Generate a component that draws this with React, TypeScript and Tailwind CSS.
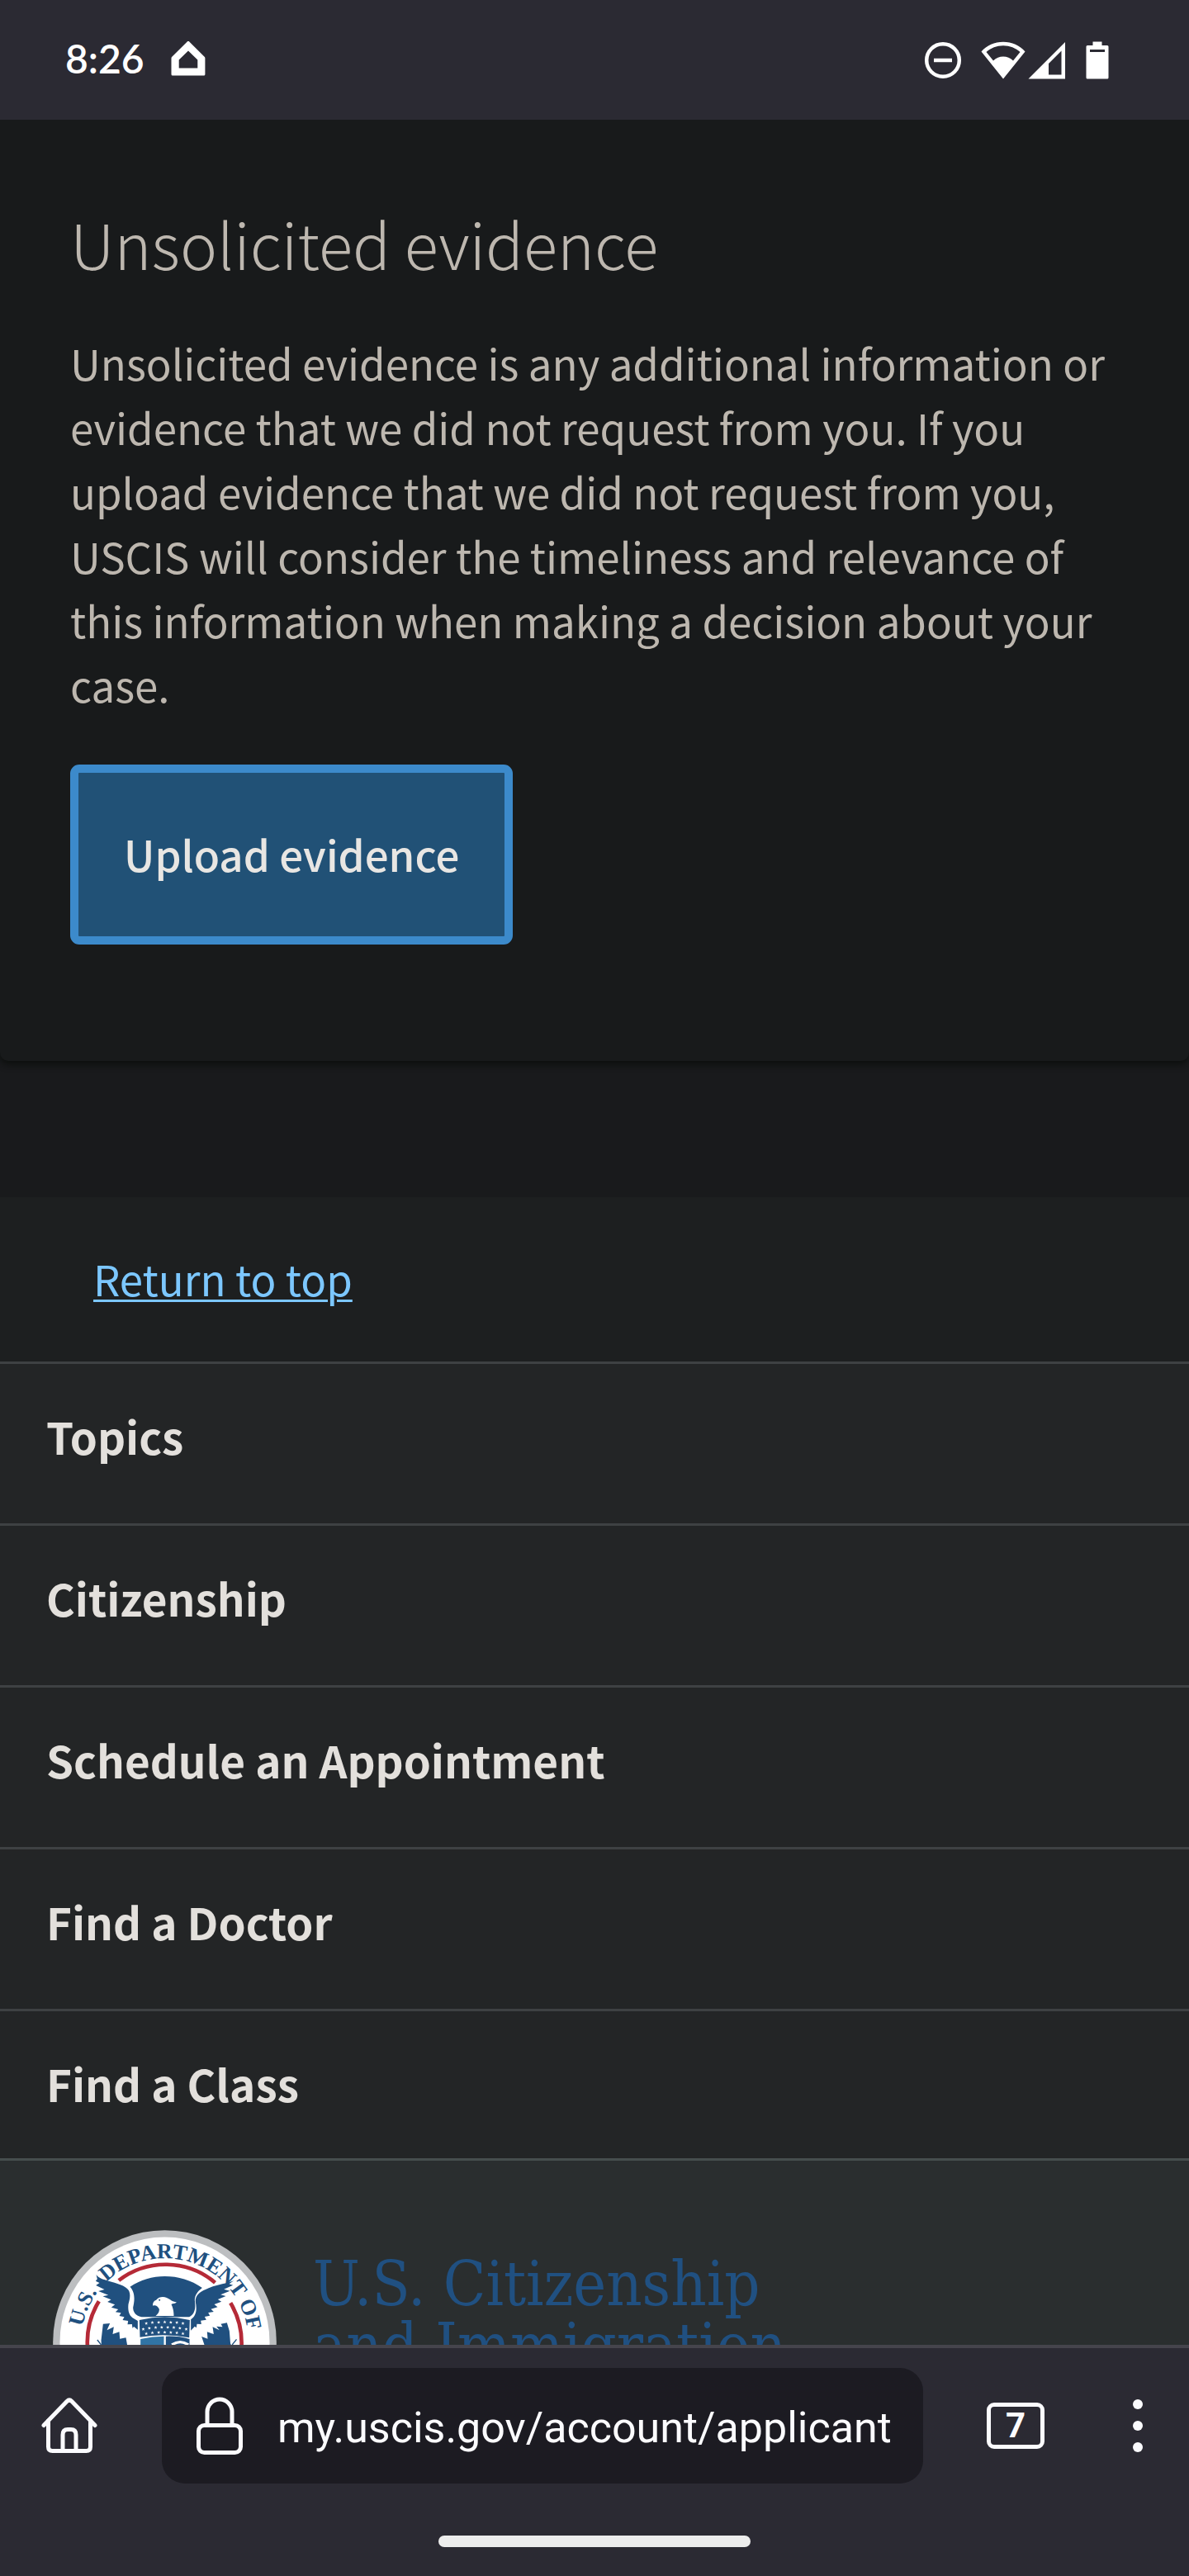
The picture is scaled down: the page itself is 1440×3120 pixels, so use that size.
import React from 'react';

const links = ['Topics', 'Citizenship', 'Schedule an Appointment', 'Find a Doctor', 'Find a Class'];

const starRows = [
  { y: 637, xs: [532, 554, 577, 599, 621, 643, 665] },
  { y: 656, xs: [521, 543, 566, 588, 610, 632, 654, 677] },
  { y: 674, xs: [532, 554, 577, 599, 621, 643, 665] },
];

function StatusBar() {
  return (
    <header className="flex h-[145px] shrink-0 items-center bg-[#2b2a33] px-[79px] pb-1 text-white">
      <span className="font-['Lato',sans-serif] text-[48px] leading-[60px] font-semibold">8:26</span>
      <svg className="ml-8 h-[42px] w-[42px]" viewBox="0 0 42 42" fill="currentColor">
        <path
          fillRule="evenodd"
          d="M19.5 .7a2 2 0 0 1 3 0L40.6 18.800c.5.5.8 1 .8 1.800V40a1.500 1.500 0 0 1-1.500 1.500H2A1.500 1.500 0 0 1 .5 40V20.600c0-.7.3-1.300.8-1.800zM21 11.500 9.700 22.500V32.500h22.600V22.500z"
        />
      </svg>
      <div className="ml-auto mr-[18px] flex items-center pt-1">
        <svg className="h-[46px] w-[46px]" viewBox="0 0 46 46" fill="none" stroke="currentColor" strokeWidth="4.500">
          <circle cx="23" cy="23" r="19.800" />
          <path d="M12 23h22" />
        </svg>
        <svg className="ml-[23px] h-[46px] w-[54px]" viewBox="0 0 54 46" fill="currentColor">
          <path
            fillRule="evenodd"
            d="M.5 12.500C7 5 16.500.8 27 .8S47 5 53.500 12.500L27 45.500zM6.500 13 15 23.500c3.500-3.300 7.500-5 12-5s8.500 1.700 12 5L47.500 13C42 8 35 5.200 27 5.200S12 8 6.500 13z"
          />
        </svg>
        <svg className="ml-[3px] h-[46px] w-[46px]" viewBox="0 0 46 46" fill="currentColor">
          <path fillRule="evenodd" d="M.5 45.500 45 1v44.500zM25 27v13.500h15.500V11.500z" />
        </svg>
        <svg className="ml-6 h-[46px] w-[28px]" viewBox="0 0 28 46" fill="currentColor">
          <path
            fillRule="evenodd"
            d="M8.500.5h11V5H26a1.500 1.500 0 0 1 1.500 1.500V44a1.500 1.500 0 0 1-1.500 1.500H2A1.500 1.500 0 0 1 .5 44V6.500A1.500 1.500 0 0 1 2 5h6.500zM5 10v3h18v-3z"
          />
        </svg>
      </div>
    </header>
  );
}

function Seal() {
  return (
    <svg className="h-[271px] w-[271px] shrink-0" viewBox="192.500 303 813 813" role="img" aria-label="Department seal">
      <defs>
        <path id="ring-text" d="M295 709.500a304 304 0 0 1 608 0" />
        <path id="star" d="M0-6 1.500-2H6L2.500 1 4 5.500 0 3-4 5.500-2.500 1-6-2h4.500z" />
      </defs>
      <circle cx="599" cy="709.500" r="406" fill="#bcbec0" />
      <circle cx="599" cy="709.500" r="381" fill="#fff" />
      <g fill="#20507f" className="font-['Liberation_Serif',serif] text-[78px] font-bold" textAnchor="middle">
        <text><textPath href="#ring-text" startOffset="13%">U.S.</textPath></text>
        <text><textPath href="#ring-text" startOffset="54%">DEPARTMENT</textPath></text>
        <text><textPath href="#ring-text" startOffset="90%">OF</textPath></text>
      </g>
      <g fill="none" stroke="#b52a37" strokeWidth="14">
        <path d="M432 486a279 279 0 0 1 350 8" />
        <path d="M360 562a279 279 0 0 0 0 295" />
        <path d="M838 568a279 279 0 0 1 0 289" />
      </g>
      <g fill="#20507f">
        <path d="M473 509C510 484 555 471 599 471c49 0 96 14 136 42-17 13-27 27-27 46 4 28 1 48-20 60H515c-24-6-31-20-31-35 6-25 8-55-11-75z" />
        <path d="M350 465c11 15 27 17 45 23 28 8 62 16 73 34 8 15 4 32-1 50-3 26 4 44 20 53l14 8v32l-14-11-5 5-2-14-16 1 2-13-20-3 6-11-18-4 6-11-20-3 10-10-25-7 13-10-27-10 13-8-30-12 20-5-36-14 22-6-31-15 13-9-14-7 6-7z" />
        <path d="M850 487c-30 12-66 14-101 31-27 11-40 25-38 46 6 30 2 50-17 64v40l14-15 6 5 2-14 16 1-2-13 20-3-6-11 19-4-6-11 20-3-10-10 24-7-12-10 26-10-13-8 29-12-19-5 34-14-22-6 33-15-14-4z" />
        <path d="M507 630q92-22 183 0l-2 64q-89-18-179-2z" />
        <path d="M375 644l25-2-11 25 25-12-4 26 24-8 2 25 22-4 7 40h-95l-2-30z" />
        <path d="M803 644l22-4 9 30 4 50h-95l-10-30 22 8-2-25 24 8-4-26 25 12-11-14 22 2z" />
        <path d="M603 689q45-2 86 10v35h-86z" />
      </g>
      <path d="M511 699q43-10 85-10v45h-85z" fill="#3174a5" />
      <path d="M625 720q30-20 60 0" fill="none" stroke="#fff" strokeWidth="10" />
      <path d="M354 702l14 18M386 696l-12 24M860 700l-16 20M826 698l12 22" fill="none" stroke="#20507f" strokeWidth="4" />
      <path d="M556 578c-2-10 4-19 12-21 10-12 26-13 38-8 13 5 20 15 36 16-6 7-12 4-19 8 7 14 9 28 9 42h-66c9-8 14-15 13-25-5-9-12-16-23-12z" fill="#fff" />
      <circle cx="580" cy="557" r="3" fill="#20507f" />
      <g fill="#fff">
        {starRows.map((row) =>
          row.xs.map((x) => (
            <use key={`${row.y}-${x}`} href="#star" x={x} y={row.y + Math.round(((x - 599) * (x - 599)) / 900)} />
          ))
        )}
      </g>
    </svg>
  );
}

function BrowserBar() {
  return (
    <footer className="shrink-0 border-t-4 border-[#45444c] bg-[#2b2a33] pb-[35px] text-[#fbfbfe]">
      <div className="flex items-center pt-6 pr-[56px] pl-[50px]">
        <button type="button" aria-label="Home" className="h-[68px] w-[68px]">
          <svg className="h-full w-full" viewBox="0 0 68 68" fill="none" stroke="currentColor" strokeWidth="5" strokeLinecap="round" strokeLinejoin="round">
            <path d="M3 33.500 31 4.500q3-3 6 0l28 29" />
            <path d="M8.500 28v31.500q0 5 5 5h41q5 0 5-5V28" />
            <path d="M26 64V45q0-6.500 6-6.500h4q6 0 6 6.500v19" />
          </svg>
        </button>
        <div className="ml-[78px] flex h-[140px] flex-1 items-center rounded-[28px] bg-[#1c1b22] pl-[42px]">
          <svg className="h-[70px] w-14 shrink-0" viewBox="0 0 56 70" fill="none" stroke="currentColor" strokeWidth="5">
            <rect x="2.500" y="34.500" width="51" height="33" rx="7" />
            <path d="M13 34V18a15 15 0 0 1 30 0v16" />
          </svg>
          <input
            type="text"
            aria-label="Address"
            readOnly
            value="my.uscis.gov/account/applicant"
            className="ml-[42px] h-[84px] w-full min-w-0 bg-transparent pt-1 font-['Roboto',sans-serif] text-[52px] leading-[80px] outline-none"
          />
        </div>
        <button
          type="button"
          aria-label="Open tabs"
          className="ml-[77px] flex h-14 w-[70px] items-center justify-center rounded-[9px] border-[5px] border-[#fbfbfe] font-['Roboto',sans-serif] text-[42px] leading-[46px] font-bold"
        >
          7
        </button>
        <button type="button" aria-label="Menu" className="ml-[107px] flex h-16 w-3 flex-col justify-between">
          <span className="h-3 w-3 rounded-full bg-[#fbfbfe]" />
          <span className="h-3 w-3 rounded-full bg-[#fbfbfe]" />
          <span className="h-3 w-3 rounded-full bg-[#fbfbfe]" />
        </button>
      </div>
      <div className="mx-auto mt-[63px] h-[14px] w-[378px] rounded-full bg-[#ededed]" />
    </footer>
  );
}

export default function App() {
  return (
    <div className="flex h-screen flex-col bg-[#191a1c] font-['Noto_Sans_CJK_SC',sans-serif] text-[51px] leading-[78px]">
      <StatusBar />
      <main className="min-h-0 flex-1 overflow-y-auto [scrollbar-width:none]">
        <section className="rounded-b-[10px] bg-[#181a1b] px-[85px] pt-[99px] pb-[141px] text-[#bdb7af] shadow-[0_4px_8px_#0c0f0d]">
          <h1 className="text-[76px] leading-[100px] font-light">Unsolicited evidence</h1>
          <p className="mt-14">
            Unsolicited evidence is any additional information or evidence that we did not request from you. If you
            upload evidence that we did not request from you, USCIS will consider the timeliness and relevance of this
            information when making a decision about your case.
          </p>
          <button
            type="button"
            className="mt-[58px] block rounded-[11px] border-[10px] border-[#3c8acb] bg-[#215176] px-[55px] pt-[59px] pb-[61px] font-medium text-[#e8e6e3]"
          >
            Upload evidence
          </button>
        </section>

        <div className="mt-[165px] bg-[#1d1f20] px-[113px] pt-[59px] pb-[62px]">
          <a href="#" className="block w-fit text-[#7cc7ff] underline decoration-[3px] underline-offset-[4px]">Return to top</a>
        </div>

        <nav className="bg-[#232526] text-[53px] text-[#e3e0dc]">
          {links.map((link) => (
            <a key={link} href="#" className="block border-t-[3px] border-[#3e4143] px-14 pt-12 pb-[67px] font-bold last:pb-[52px]">
              {link}
            </a>
          ))}
        </nav>

        <div className="flex items-start border-t-[3px] border-[#464e4e] bg-[#2a2e2f] pt-[84px] pl-16">
          <Seal />
          <p className="ml-11 pt-7 font-['DejaVu_Serif_Condensed','DejaVu_Serif',serif] text-[75px] leading-[75px] text-[#205081]">
            U.S. Citizenship<br />and Immigration
          </p>
        </div>
      </main>
      <BrowserBar />
    </div>
  );
}
